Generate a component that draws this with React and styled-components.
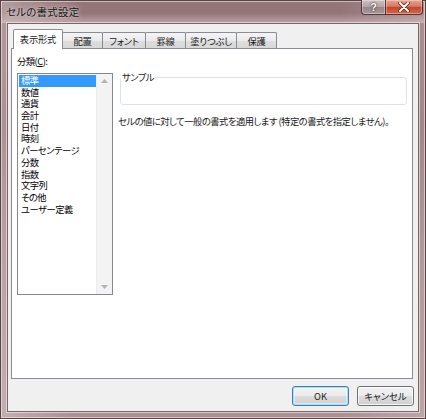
import React from "react";
import styled, { createGlobalStyle } from "styled-components";

const GlobalStyle = createGlobalStyle`
  html, body {
    margin: 0;
    padding: 0;
    background: #ffffff;
  }
  body {
    font-family: "Noto Sans CJK JP", "Liberation Sans", sans-serif;
    font-feature-settings: "palt";
  }
`;

const categories = [
  "標準",
  "数値",
  "通貨",
  "会計",
  "日付",
  "時刻",
  "パーセンテージ",
  "分数",
  "指数",
  "文字列",
  "その他",
  "ユーザー定義",
];

const tabs = [
  { label: "表示形式", width: 50, active: true },
  { label: "配置", width: 41 },
  { label: "フォント", width: 44 },
  { label: "罫線", width: 41 },
  { label: "塗りつぶし", width: 52 },
  { label: "保護", width: 41 },
];

export default function App() {
  return (
    <>
      <GlobalStyle />
      <Window>
        <TitleBar>
          <Title>セルの書式設定</Title>
          <CaptionButtons>
            <HelpButton>?</HelpButton>
            <CloseButton>
              <svg width="12" height="10" viewBox="0 0 12 10">
                <path d="M2 1 L10 9 M10 1 L2 9" stroke="#5a1c10" strokeWidth="3.4" strokeLinecap="round" />
                <path d="M2 1 L10 9 M10 1 L2 9" stroke="#ffffff" strokeWidth="2" strokeLinecap="round" />
              </svg>
            </CloseButton>
          </CaptionButtons>
        </TitleBar>

        <Client>
          <TabRow>
            {tabs.map((t) => (
              <Tab key={t.label} $active={t.active} $width={t.width}>
                {t.label}
              </Tab>
            ))}
          </TabRow>

          <Panel>
            <LeftCol>
              <FieldLabel>
                分類(<u>C</u>):
              </FieldLabel>
              <ListBox>
                <Items>
                  {categories.map((c, i) => (
                    <Item key={c} $selected={i === 0}>
                      {c}
                    </Item>
                  ))}
                </Items>
                <ScrollBar>
                  <Arrow>
                    <svg width="7" height="4" viewBox="0 0 7 4">
                      <path d="M0 4 L3.5 0 L7 4 Z" fill="#b4b4b4" />
                    </svg>
                  </Arrow>
                  <Arrow>
                    <svg width="7" height="4" viewBox="0 0 7 4">
                      <path d="M0 0 L3.5 4 L7 0 Z" fill="#b4b4b4" />
                    </svg>
                  </Arrow>
                </ScrollBar>
              </ListBox>
            </LeftCol>

            <RightCol>
              <Group>
                <Legend>サンプル</Legend>
              </Group>
              <Description>
                セルの値に対して一般の書式を適用します (特定の書式を指定しません)。
              </Description>
            </RightCol>
          </Panel>

          <Footer>
            <Button $default>OK</Button>
            <Button>キャンセル</Button>
          </Footer>
        </Client>
      </Window>
    </>
  );
}

const Window = styled.div`
  width: 426px;
  height: 419px;
  box-sizing: border-box;
  display: flex;
  flex-direction: column;
  padding: 0 6px 6px 6px;
  border: 1px solid #5b4244;
  background:
    linear-gradient(90deg, rgba(255, 255, 255, 0.28), rgba(255, 255, 255, 0) 18%, rgba(255, 255, 255, 0) 80%, rgba(255, 255, 255, 0.2)),
    linear-gradient(180deg, #947679 0%, #8a6b6e 30%, #9c8184 60%, #a99194 100%);
  box-shadow: inset 0 0 0 1px rgba(255, 240, 240, 0.55);
`;

const TitleBar = styled.div`
  height: 22px;
  display: flex;
  justify-content: space-between;
  align-items: flex-start;
  background: linear-gradient(180deg, rgba(255, 255, 255, 0) 0%, rgba(255, 255, 255, 0) 55%, rgba(235, 220, 222, 0.45) 100%);
  margin: 0 -6px;
  padding: 0 2px 0 5px;
`;

const Title = styled.div`
  font-size: 10.5px;
  line-height: 22px;
  color: #141010;
  text-shadow: 0 0 6px rgba(255, 255, 255, 0.7), 0 0 2px rgba(255, 255, 255, 0.6);
  letter-spacing: 0.2px;
`;

const CaptionButtons = styled.div`
  display: flex;
  margin-top: -1px;
`;

const CaptionBase = styled.div`
  height: 15px;
  box-sizing: border-box;
  display: flex;
  align-items: center;
  justify-content: center;
  border: 1px solid rgba(60, 36, 38, 0.85);
  border-top: none;
  box-shadow: inset 0 0 0 1px rgba(255, 255, 255, 0.35);
`;

const HelpButton = styled(CaptionBase)`
  width: 24px;
  border-right: none;
  border-bottom-left-radius: 4px;
  background: linear-gradient(180deg, #cdbfc0 0%, #b3a3a4 50%, #978587 51%, #a89899 100%);
  color: #ffffff;
  font-family: "Liberation Sans", sans-serif;
  font-weight: bold;
  font-size: 11px;
  text-shadow: 0 0 2px #3a2a2b, 0 0 1px #3a2a2b;
`;

const CloseButton = styled(CaptionBase)`
  width: 38px;
  border-bottom-right-radius: 4px;
  background: linear-gradient(180deg, #e6a291 0%, #d57c66 45%, #c3472d 52%, #d2674c 100%);
`;

const Client = styled.div`
  flex: 1;
  display: flex;
  flex-direction: column;
  background: #f0f0f0;
  border: 1px solid #7a6466;
  box-shadow: 0 0 0 1px rgba(255, 245, 245, 0.55);
  font-size: 9.3px;
  letter-spacing: -0.5px;
  color: #000000;
`;

const TabRow = styled.div`
  height: 24px;
  box-sizing: border-box;
  display: flex;
  align-items: flex-end;
  padding-left: 5px;
`;

const Tab = styled.div`
  width: ${(p) => p.$width}px;
  height: ${(p) => (p.$active ? 20 : 16)}px;
  margin-bottom: ${(p) => (p.$active ? -1 : 0)}px;
  margin-right: -1px;
  box-sizing: border-box;
  display: flex;
  align-items: center;
  justify-content: center;
  padding-bottom: ${(p) => (p.$active ? 2 : 0)}px;
  border: 1px solid #898c95;
  border-bottom: none;
  border-radius: 2px 2px 0 0;
  background: ${(p) =>
    p.$active ? "#ffffff" : "linear-gradient(180deg, #f4f4f4 0%, #ebebeb 50%, #dedede 51%, #d8d8d8 100%)"};
  position: relative;
  z-index: ${(p) => (p.$active ? 2 : 1)};
  color: #1a1a1a;
  letter-spacing: -0.2px;
`;

const Panel = styled.div`
  height: 331px;
  box-sizing: border-box;
  margin: 0 5px 0 3px;
  border: 1px solid #898c95;
  background: #ffffff;
  display: flex;
  gap: 5px;
  padding: 6px 5px 0 5px;
`;

const LeftCol = styled.div`
  width: 96px;
  flex-shrink: 0;
  display: flex;
  flex-direction: column;
`;

const FieldLabel = styled.div`
  line-height: 13px;
  margin-bottom: 5px;
  u {
    text-decoration: underline;
  }
`;

const ListBox = styled.div`
  height: 222px;
  box-sizing: border-box;
  border: 1px solid #828790;
  display: flex;
`;

const Items = styled.div`
  flex: 1;
  padding: 1px 0 0 1px;
`;

const Item = styled.div`
  height: 11.7px;
  line-height: 11.7px;
  padding-left: 2px;
  white-space: nowrap;
  background: ${(p) => (p.$selected ? "#3399ff" : "transparent")};
  color: ${(p) => (p.$selected ? "#ffffff" : "#000000")};
`;

const ScrollBar = styled.div`
  width: 15px;
  display: flex;
  flex-direction: column;
  justify-content: space-between;
  background: #f3f3f3;
  border-left: 1px solid #ececec;
`;

const Arrow = styled.div`
  height: 14px;
  display: flex;
  align-items: center;
  justify-content: center;
`;

const RightCol = styled.div`
  flex: 1;
  min-width: 0;
  display: flex;
  flex-direction: column;
  padding-top: 17px;
`;

const Group = styled.fieldset`
  margin: 0 0 0 2px;
  padding: 0;
  height: 33px;
  box-sizing: border-box;
  border: 1px solid #dde3e8;
  border-radius: 3px;
`;

const Legend = styled.legend`
  padding: 0 1px;
  margin-left: 0;
  line-height: 11px;
  color: #1a1a1a;
`;

const Description = styled.div`
  margin-top: 10px;
  line-height: 13px;
  white-space: nowrap;
  color: #1a1a1a;
`;

const Footer = styled.div`
  flex: 1;
  display: flex;
  justify-content: flex-end;
  align-items: flex-start;
  gap: 8px;
  padding: 7px 4px 0 0;
`;

const Button = styled.div`
  width: 57px;
  height: 20px;
  box-sizing: border-box;
  display: flex;
  align-items: center;
  justify-content: center;
  border-radius: 3px;
  border: 1px solid ${(p) => (p.$default ? "#3c7fb1" : "#707070")};
  background: linear-gradient(180deg, #f2f2f2 0%, #ebebeb 50%, #dddddd 51%, #cfcfcf 100%);
  box-shadow: ${(p) =>
    p.$default ? "inset 0 0 0 1px #a6e0f8, inset 0 0 0 2px rgba(255,255,255,0.4)" : "inset 0 0 0 1px rgba(255,255,255,0.8)"};
  color: #1a1a1a;
  letter-spacing: 0;
`;
